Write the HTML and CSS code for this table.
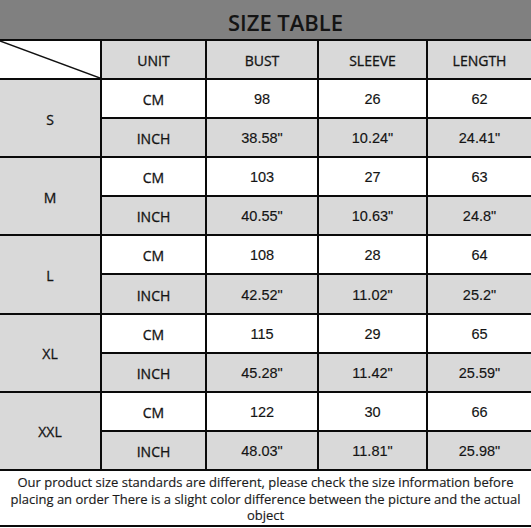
FILE: index.html
```html
<!DOCTYPE html>
<html>
<head>
<meta charset="utf-8">
<link rel="stylesheet" href="styles.css">
</head>
<body>
<div class="sheet">
  <div class="title">SIZE TABLE</div>

  <div class="corner"><svg class="diag" viewBox="0 0 100 100" preserveAspectRatio="none"><line x1="0" y1="0" x2="100" y2="100" stroke="#111" stroke-width="1.5" vector-effect="non-scaling-stroke"/></svg></div>
  <div class="cell gray head">UNIT</div>
  <div class="cell gray head">BUST</div>
  <div class="cell gray head">SLEEVE</div>
  <div class="cell gray head">LENGTH</div>

  <div class="size">S</div>
  <div class="cell head">CM</div><div class="cell num">98</div><div class="cell num">26</div><div class="cell num">62</div>
  <div class="cell gray head">INCH</div><div class="cell gray num">38.58"</div><div class="cell gray num">10.24"</div><div class="cell gray num">24.41"</div>

  <div class="size">M</div>
  <div class="cell head">CM</div><div class="cell num">103</div><div class="cell num">27</div><div class="cell num">63</div>
  <div class="cell gray head">INCH</div><div class="cell gray num">40.55"</div><div class="cell gray num">10.63"</div><div class="cell gray num">24.8"</div>

  <div class="size">L</div>
  <div class="cell head">CM</div><div class="cell num">108</div><div class="cell num">28</div><div class="cell num">64</div>
  <div class="cell gray head">INCH</div><div class="cell gray num">42.52"</div><div class="cell gray num">11.02"</div><div class="cell gray num">25.2"</div>

  <div class="size">XL</div>
  <div class="cell head">CM</div><div class="cell num">115</div><div class="cell num">29</div><div class="cell num">65</div>
  <div class="cell gray head">INCH</div><div class="cell gray num">45.28"</div><div class="cell gray num">11.42"</div><div class="cell gray num">25.59"</div>

  <div class="size">XXL</div>
  <div class="cell head">CM</div><div class="cell num">122</div><div class="cell num">30</div><div class="cell num">66</div>
  <div class="cell gray head">INCH</div><div class="cell gray num">48.03"</div><div class="cell gray num">11.81"</div><div class="cell gray num">25.98"</div>

  <div class="note">Our product size standards are different, please check the size information before placing an order There is a slight color difference between the picture and the actual object</div>
</div>
</body>
</html>
```

FILE: styles.css
```css
html, body {
  margin: 0;
  padding: 0;
  background: #fff;
}
.sheet {
  width: 531px;
  display: grid;
  grid-template-columns: 100px 103px 110px 107px 103px;
  grid-template-rows: 39px 37px repeat(10, 37.1px) 54px;
  gap: 2px;
  background: #0a0a0a;
  border-bottom: 2px solid #0a0a0a;
  font-family: "Open Sans", "Noto Sans", sans-serif;
  color: #141414;
}
.title {
  grid-column: 1 / -1;
  background: #808080;
  display: flex;
  align-items: center;
  justify-content: center;
  font-size: 22px;
  font-weight: 600;
  color: #141414;
  padding: 4px 0 0 40px;
}
.corner {
  background: #fff;
  position: relative;
}
.diag {
  position: absolute;
  inset: 0;
  width: 100%;
  height: 100%;
}
.cell {
  background: #fff;
  display: flex;
  align-items: center;
  justify-content: center;
  padding-top: 2px;
}
.cell.gray {
  background: #d9d9d9;
}
.head {
  font-size: 14px;
  -webkit-text-stroke: 0.3px #141414;
}
.num {
  font-family: "Liberation Sans", Arial, sans-serif;
  font-size: 14.5px;
  padding-top: 1px;
  -webkit-text-stroke: 0.15px #141414;
}
.size {
  grid-row: span 2;
  background: #d9d9d9;
  display: flex;
  align-items: center;
  justify-content: center;
  font-size: 14px;
  -webkit-text-stroke: 0.3px #141414;
  padding-top: 2px;
}
.note {
  grid-column: 1 / -1;
  background: #fff;
  display: flex;
  align-items: center;
  justify-content: center;
  text-align: center;
  font-size: 13px;
  line-height: 16.5px;
  padding: 2px 4px 0;
  color: #1a1a1a;
  -webkit-text-stroke: 0.15px #1a1a1a;
}
```
